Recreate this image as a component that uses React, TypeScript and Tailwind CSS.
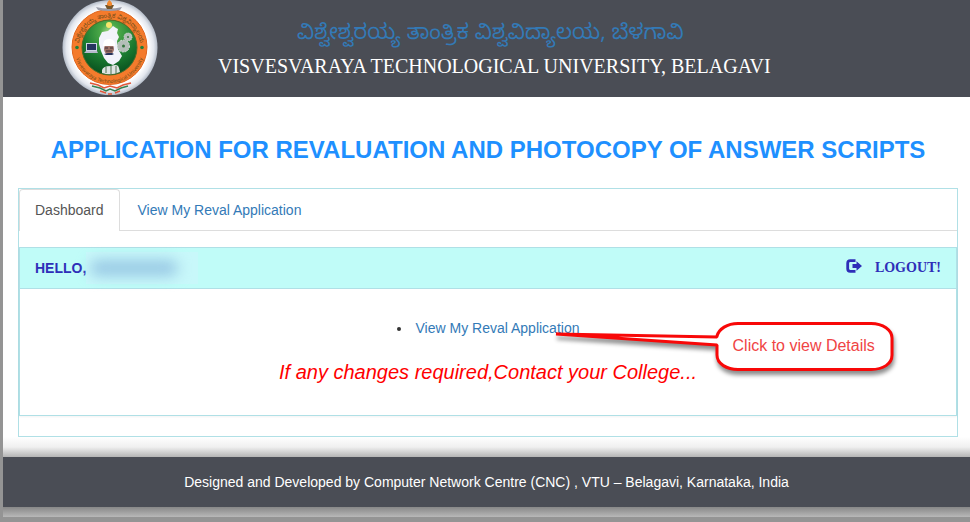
const UniversityLogo = () => (
  <svg viewBox="0 0 96 97" className="h-[97px] w-24 shrink-0" role="img" aria-label="VTU">
    <defs>
      <radialGradient id="ring" cx="50%" cy="50%" r="50%">
        <stop offset="80%" stopColor="#ffffff" />
        <stop offset="92%" stopColor="#e3e7ee" />
        <stop offset="100%" stopColor="#b4bcc8" />
      </radialGradient>
      <radialGradient id="field" cx="50%" cy="22%" r="75%">
        <stop offset="0%" stopColor="#a8d98c" />
        <stop offset="22%" stopColor="#4ba848" />
        <stop offset="65%" stopColor="#1a7a30" />
        <stop offset="100%" stopColor="#0b5420" />
      </radialGradient>
      <path id="arcTop" d="M17 54 A31 31 0 1 1 78 54" />
      <path id="arcBottom" d="M12.5 48 A35 35 0 0 0 82.5 48" />
    </defs>
    <circle cx="48" cy="47.5" r="47.5" fill="url(#ring)" />
    <circle cx="47.5" cy="47" r="37.5" fill="#f47b2c" stroke="#e0651c" />
    <circle cx="47.5" cy="47.5" r="27.5" fill="url(#field)" stroke="#4b6b28" />
    <g fill="#6b4a18" fontFamily="'Noto Sans Kannada', 'Noto Sans', sans-serif">
      <text fontSize="6">
        <textPath href="#arcTop" startOffset="50%" textAnchor="middle">
          ವಿಶ್ವೇಶ್ವರಯ್ಯ ತಾಂತ್ರಿಕ ವಿಶ್ವವಿದ್ಯಾಲಯ
        </textPath>
      </text>
      <text fontSize="5">
        <textPath href="#arcBottom" startOffset="50%" textAnchor="middle">
          Visvesvaraya Technological University
        </textPath>
      </text>
    </g>
    <circle cx="15" cy="47.5" r="1.8" fill="#20803a" />
    <circle cx="80" cy="47.5" r="1.8" fill="#20803a" />
    <path d="M34 7 Q47 10 60 7 L58 10 Q47 12 36 10 Z" fill="#9a9daa" />
    <path d="M43 5 h9 l-2 4 h-5 Z" fill="#75562b" />
    <path d="M47.5 0 C52 4 50 6 47.5 6 C44 6 44 3 47.5 0 Z" fill="#f28a30" />
    <circle cx="47" cy="25" r="3" fill="#f7e66b" />
    <path
      d="M51 26 L54 28 L56 29 L55 33 L57 37 L55 41 L56 49 L60 56 L57 61 L51 65 L46 63 L42 58 L39 51 L37 44 L37 38 L40 32 L46 31 Z"
      fill="#f2f3fb"
    />
    <ellipse cx="47" cy="49" rx="5" ry="5.5" fill="#9c7167" />
    <path d="M41 46 Q41 38 48 39 Q54 40 53 46 Z" fill="#ffffff" />
    <path d="M43 48 h3 M48 48 h3 M44 51 h6" stroke="#403039" strokeWidth="1" />
    <path d="M42 54 L46 53 L50 53 L52 54 L50 55 H44 Z" fill="#27335b" />
    <path d="M24 43 h11 v8 h-11 Z" fill="#cdd4e5" />
    <path d="M25 44 h9 v6 h-9 Z" fill="#25365f" />
    <path d="M24 51 h11 l1 2 h-14 Z" fill="#b7b9cc" />
    <circle cx="61.5" cy="46" r="6" fill="#b4beb8" />
    <circle cx="61.5" cy="46" r="6" fill="none" stroke="#d8deda" strokeDasharray="2 1" />
    <circle cx="61.5" cy="46" r="1.5" fill="#35753d" />
    <circle cx="66" cy="37" r="4" fill="#b4beb8" />
    <circle cx="66" cy="37" r="4" fill="none" stroke="#d8deda" strokeDasharray="1 1" />
    <circle cx="66" cy="37" r="1" fill="#35753d" />
    <path d="M40 70 Q41 66 49 66 Q56 63 57 68 L58 72 Q49 76 40 73 Z" fill="#dfe3e2" />
    <path d="M44 67 v6 M49 66 v8 M54 66 v8" stroke="#4c7252" />
    <g fill="none" strokeWidth="1.5">
      <path d="M28 83 L36 85 L42 88 L48 86 L55 88 L61 85 L69 83" stroke="#e0583a" />
      <path d="M30 86 L38 88 L44 91 L48 89 L53 91 L59 88 L66 86" stroke="#368252" />
      <path d="M38 91 L44 93 M53 93 L58 91 M46 94 L50 94" stroke="#e0583a" />
    </g>
  </svg>
);

const LogoutIcon = () => (
  <svg viewBox="0 0 16 14" className="-mt-1 mr-px h-3.5 w-4" aria-hidden="true">
    <path d="M9.5 1.7 H4.2 Q1.7 1.7 1.7 4.2 V9.8 Q1.7 12.3 4.2 12.3 H9.5" fill="none" stroke="currentColor" strokeWidth="2.8" />
    <path d="M6.5 5 H10.5 V2.2 L16 7 L10.5 11.8 V9 H6.5 Z" fill="currentColor" />
  </svg>
);

const Callout = () => (
  <div className="pointer-events-none absolute top-0 left-[137px] h-16 w-[350px]">
    <svg viewBox="0 0 350 64" className="h-16 w-[350px] overflow-visible" aria-hidden="true">
      <path
        d="M164 18 C166 11 174 5.5 185 5.5 H318 C330 5.5 339 12 339 20 V37 C339 46 330 51.5 318 51.5 H185 C174 51.5 164 46 164 37 V27 L3 16 L164 19 Z"
        fill="#ffffff"
        stroke="#f80808"
        strokeWidth="3"
        strokeLinejoin="bevel"
        className="drop-shadow-[1px_4px_2px_rgba(0,0,0,0.45)]"
      />
    </svg>
    <span className="absolute top-4 left-[180px] text-base leading-6 whitespace-nowrap text-[#f04444]">
      Click to view Details
    </span>
  </div>
);

const Header = () => (
  <header className="flex bg-[#4a4d55] pl-[59px]">
    <UniversityLogo />
    <div className="ml-[60px] flex flex-col items-center pt-[22px] whitespace-nowrap">
      <p className="pr-2 font-['Noto_Sans_Kannada','Noto_Sans',sans-serif] text-[21px] leading-7 text-[#337ab7]">
        ವಿಶ್ವೇಶ್ವರಯ್ಯ ತಾಂತ್ರಿಕ ವಿಶ್ವವಿದ್ಯಾಲಯ, ಬೆಳಗಾವಿ
      </p>
      <p className="font-['Liberation_Serif',serif] text-xl leading-8 text-white">
        VISVESVARAYA TECHNOLOGICAL UNIVERSITY, BELAGAVI
      </p>
    </div>
  </header>
);

const Tabs = () => (
  <nav className="flex border-b border-[#dddddd]">
    <a href="#dashboard" className="-mb-px rounded-t border border-b-0 border-[#dddddd] bg-white px-[15px] pt-[10px] pb-[11px] text-[#555555]">
      Dashboard
    </a>
    <a href="#reval" className="px-[18px] pt-[11px] pb-[10px] text-[#337ab7]">
      View My Reval Application
    </a>
  </nav>
);

const App = () => {
  return (
    <div className="min-h-screen bg-[#949494] pl-[3px] font-['Liberation_Sans',Arial,sans-serif] text-sm leading-5">
      <div className="bg-white">
        <Header />
        <main className="bg-linear-to-t from-[#b4b4b4] via-[#f0f0f0] via-[10px] to-white to-[20px] px-[15px] pr-3 pb-5">
          <h1 className="pt-9 pb-[22px] text-center text-2xl leading-[33px] font-bold whitespace-nowrap text-[#1e90ff]">
            APPLICATION FOR REVALUATION AND PHOTOCOPY OF ANSWER SCRIPTS
          </h1>
          <div className="border border-[#b0e0e6] pb-5">
            <Tabs />
            <section className="mt-4 border border-[#b0e0e6] shadow-xs">
              <div className="flex items-center justify-between border-b border-[#b0e0e6] bg-[#c0fcf8] px-[15px] text-[#2e2eb8]">
                <div className="flex items-center font-bold">
                  HELLO,
                  <div className="my-1 h-8 w-28 bg-[#c8f8fa] py-2">
                    <div className="ml-1 h-4 w-[88px] rounded-full bg-[#98c8e4] blur-[7px]" />
                  </div>
                </div>
                <a href="#logout" className="flex items-center gap-3 font-['Liberation_Serif',serif] font-bold">
                  <LogoutIcon />
                  LOGOUT!
                </a>
              </div>
              <div className="pt-[29px] pb-[29px] text-center">
                <ul className="list-inside list-disc text-[#333333]">
                  <li>
                    <a href="#reval" className="relative inline-block text-[#337ab7]">
                      View My Reval Application
                      <Callout />
                    </a>
                  </li>
                </ul>
                <p className="mt-5 text-xl leading-7 text-[#ff0000] italic">
                  If any changes required,Contact your College...
                </p>
              </div>
            </section>
          </div>
        </main>
        <footer className="bg-[#4a4d55] py-[15px] text-center text-white">
          Designed and Developed by Computer Network Centre (CNC) , VTU – Belagavi, Karnataka, India
        </footer>
        <div className="h-[10px] bg-linear-to-b from-[#888888] to-[#b8b8b8]" />
      </div>
    </div>
  );
};

export default App;
